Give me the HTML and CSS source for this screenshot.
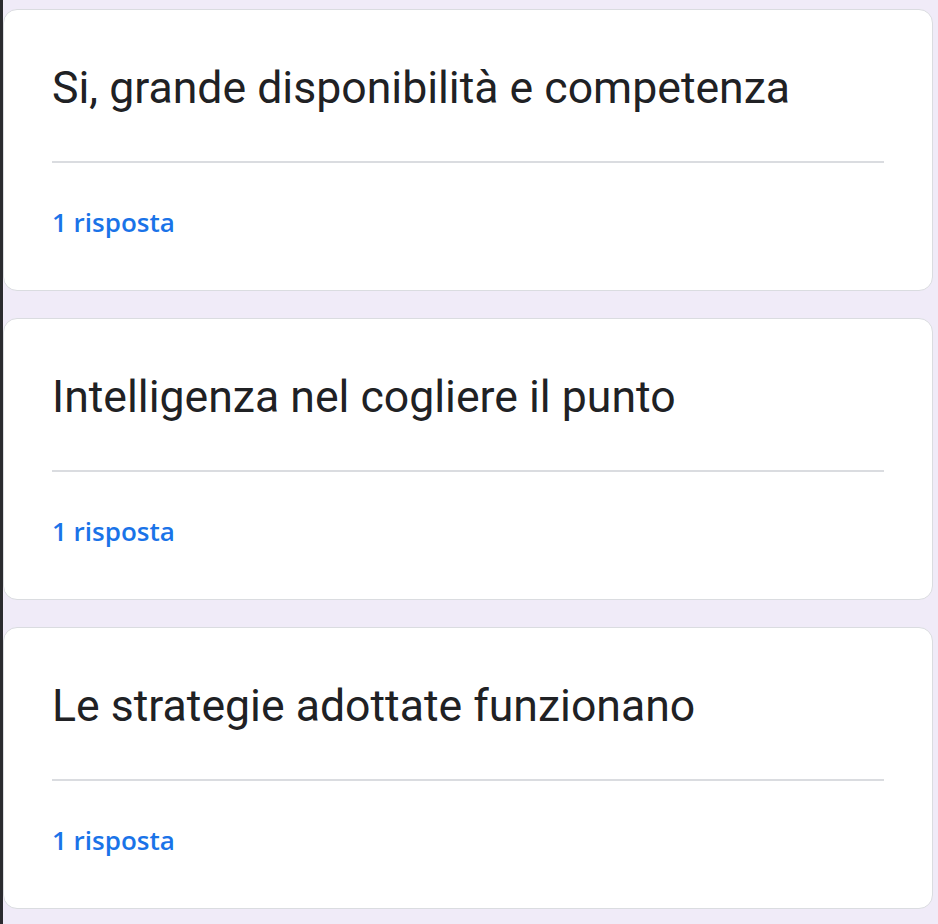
FILE: index.html
```html
<!DOCTYPE html>
<html lang="it">
<head>
  <meta charset="UTF-8" />
  <meta name="viewport" content="width=device-width, initial-scale=1.0" />
  <title>Risposte</title>
  <link rel="stylesheet" href="styles.css">
</head>
<body>
  <div class="list">
    <div class="card">
      <div class="answer">Si, grande disponibilità e competenza</div>
      <div class="divider"></div>
      <div class="count">1 risposta</div>
    </div>

    <div class="card">
      <div class="answer">Intelligenza nel cogliere il punto</div>
      <div class="divider"></div>
      <div class="count">1 risposta</div>
    </div>

    <div class="card">
      <div class="answer">Le strategie adottate funzionano</div>
      <div class="divider"></div>
      <div class="count">1 risposta</div>
    </div>
  </div>
</body>
</html>
```

FILE: styles.css
```css
body {
  margin: 0;
  font-family: Roboto, 'Noto Sans', sans-serif;
  background: #f0ebf8;
  border-left: 3px solid #2b2b2f;
  min-height: 924px;
  box-sizing: border-box;
}
.list {
  padding: 9px 5px 0 0;
  display: flex;
  flex-direction: column;
  gap: 27px;
}
.card {
  background: #ffffff;
  border: 1px solid #dadce0;
  border-radius: 14px;
  padding: 50px 48px 54px 48px;
}
.answer {
  font-size: 44.6px;
  line-height: 56px;
  color: #202124;
}
.divider {
  height: 2px;
  background: #dadce0;
  margin: 45px 0 45px 0;
}
.count {
  font-family: 'Open Sans', Roboto, sans-serif;
  font-size: 26px;
  line-height: 28px;
  font-weight: 600;
  color: #1a73e8;
}
```
